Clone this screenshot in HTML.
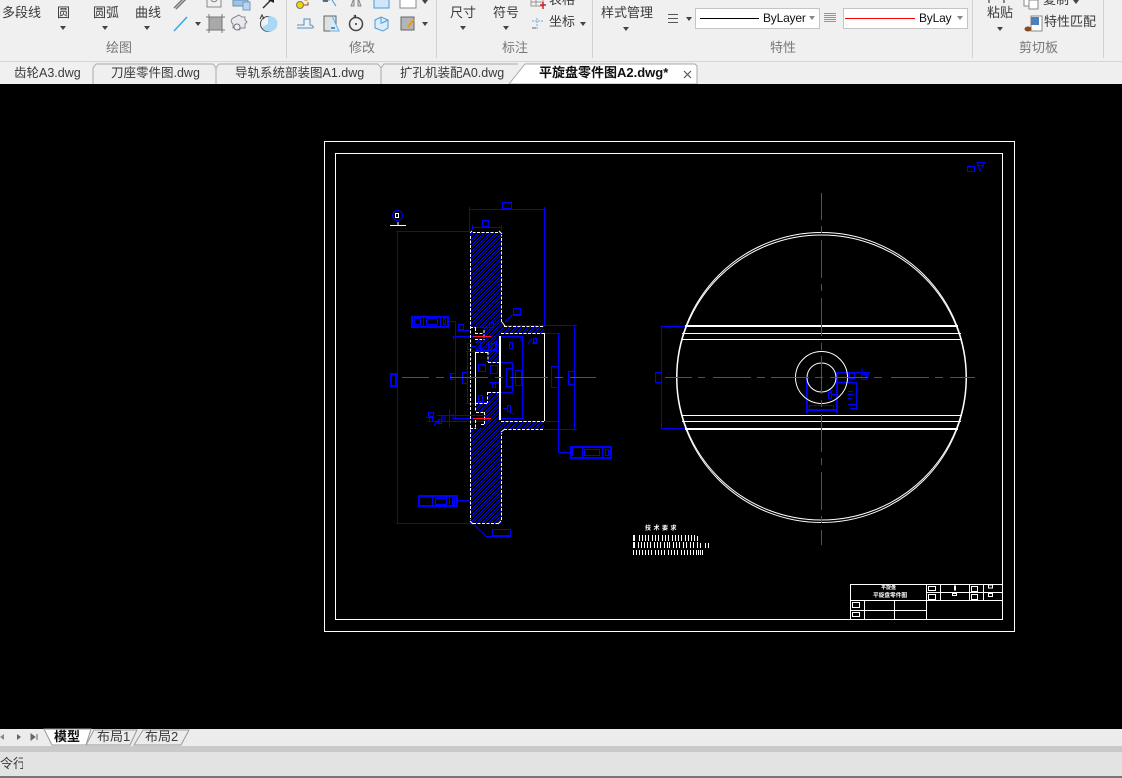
<!DOCTYPE html>
<html lang="zh"><head><meta charset="utf-8"><title>CAD</title>
<style>
html,body{margin:0;padding:0;background:#000}
#p{position:relative;width:1122px;height:778px;overflow:hidden;background:#000;font-family:"Liberation Sans","Noto Sans CJK SC",sans-serif}
.b{position:absolute;left:0}
.t{position:absolute;white-space:nowrap;font-size:13px;line-height:16px;height:16px;color:#3a3a3a}
.g{color:#777}
.a{position:absolute;width:0;height:0;border-left:3px solid transparent;border-right:3px solid transparent;border-top:4px solid #444}
.v{position:absolute;top:0;width:1px;height:58px;background:#d0d0d0}
.c{position:absolute;top:8px;height:19px;width:123px;background:#fff;border:1px solid #c4c4c4}
svg{position:absolute;left:0;top:0}
</style></head><body><div id="p">
<div class="b" style="top:0;width:1122px;height:61px;background:#f0f0f0"></div>
<div class="b" style="top:61px;width:1122px;height:23px;background:#efefef;border-top:1px solid #d6d6d6;box-sizing:border-box"></div>
<div class="b" style="top:729px;width:1122px;height:17px;background:#ececec"></div>
<div class="b" style="top:746px;width:1122px;height:6px;background:#c9c9c9"></div>
<div class="b" style="top:752px;width:1122px;height:24px;background:#e3e3e3"></div>
<div class="b" style="top:776px;width:1122px;height:2px;background:#777"></div>
<div class="v" style="left:286px"></div><div class="v" style="left:436px"></div><div class="v" style="left:592px"></div><div class="v" style="left:972px"></div><div class="v" style="left:1103px"></div>

<span class="t" style="left:2px;top:5px">多段线</span>
<span class="t" style="left:57px;top:5px">圆</span>
<span class="t" style="left:93px;top:5px">圆弧</span>
<span class="t" style="left:135px;top:5px">曲线</span>
<span class="t" style="left:450px;top:5px">尺寸</span>
<span class="t" style="left:493px;top:5px">符号</span>
<span class="t" style="left:549px;top:-8px">表格</span>
<span class="t" style="left:549px;top:14px">坐标</span>
<span class="t" style="left:601px;top:5px">样式管理</span>
<span class="t" style="left:987px;top:5px">粘贴</span>
<span class="t" style="left:1043px;top:-8px">复制</span>
<span class="t" style="left:1044px;top:14px">特性匹配</span>
<span class="t g" style="left:106px;top:40px">绘图</span>
<span class="t g" style="left:349px;top:40px">修改</span>
<span class="t g" style="left:502px;top:40px">标注</span>
<span class="t g" style="left:770px;top:40px">特性</span>
<span class="t g" style="left:1019px;top:40px">剪切板</span>

<i class="a" style="left:60px;top:26px"></i><i class="a" style="left:102px;top:26px"></i><i class="a" style="left:144px;top:26px"></i>
<i class="a" style="left:195px;top:22px"></i><i class="a" style="left:422px;top:22px"></i><i class="a" style="left:422px;top:0"></i>
<i class="a" style="left:460px;top:26px"></i><i class="a" style="left:503px;top:26px"></i><i class="a" style="left:580px;top:22px"></i>
<i class="a" style="left:623px;top:27px"></i><i class="a" style="left:686px;top:17px"></i><i class="a" style="left:997px;top:27px"></i><i class="a" style="left:1073px;top:0"></i>

<div class="c" style="left:695px"></div>
<div class="c" style="left:843px"></div>
<div class="b" style="left:700px;top:18px;width:59px;height:1px;background:#000"></div>
<div class="b" style="left:845px;top:18px;width:70px;height:1px;background:#f00"></div>
<span class="t" style="left:763px;top:10px;font-size:12px;letter-spacing:-.2px;color:#111">ByLayer</span>
<span class="t" style="left:919px;top:10px;font-size:12px;letter-spacing:-.2px;color:#111;width:33px;overflow:hidden">ByLayer</span>
<i class="a" style="left:809px;top:16px;border-top-color:#888"></i><i class="a" style="left:957px;top:16px;border-top-color:#888"></i>

<svg width="1122" height="84" viewBox="0 0 1122 84" fill="none">
<!-- draw icons -->
<path d="M174 8L184 -2M176 9L186 -1" stroke="#777" stroke-width="1.5"/>
<path d="M174 31L187 17" stroke="#35a8e8" stroke-width="1.5"/>
<path d="M207 0V7H221V0M211 0A3.500 3.500 0 0 0 217 0" stroke="#888"/>
<path d="M233 0H248V6H233Z" fill="#9cc3e8" stroke="#6a8fb5"/><path d="M243 2H250V10H243Z" fill="#b8d4ee" stroke="#7b9ab8"/>
<path d="M263 8L271 0" stroke="#333" stroke-width="1.500"/><path d="M268 0H274V3Z" fill="#222"/>
<rect x="209" y="17" width="13" height="13" fill="#a9a9a9" stroke="#666"/><path d="M206 17H225M206 30H225M209 14V33M222 14V33" stroke="#777"/>
<path d="M240 16l3 2h3v3l2 2-2 2v4h-4l-2 2-2-2h-4v-4a3.500 3.500 0 0 1 0-6l2-1z" transform="translate(-1,-1)" stroke="#8a8a8a" fill="#e8e8ee"/><circle cx="237" cy="27" r="3" fill="#f0f0f0" stroke="#777"/>
<circle cx="268" cy="24" r="7.500" stroke="#444"/><path d="M268 24V16.500A7.500 7.500 0 0 1 272 31A7.500 7.500 0 0 1 262 27Z" fill="#a8d8f5"/><path d="M260 19l2-4 2 4" stroke="#333"/>
<!-- modify icons -->
<circle cx="300" cy="5" r="3.500" fill="#f5d400" stroke="#777"/><path d="M304 5H308V2" stroke="#a33"/><circle cx="306" cy="-1" r="2" fill="#d8a000"/>
<path d="M322 0H330M332 0L336 6" stroke="#4a90d0"/><rect x="323" y="-1" width="5" height="3" fill="#666"/>
<path d="M351 6L354 -2V6ZM358 6V-2L361 6Z" stroke="#888" fill="#cfd8e0"/>
<rect x="374" y="-3" width="15" height="11" fill="#cfe6fa" stroke="#4d9ad8"/>
<rect x="400" y="-3" width="16" height="11" fill="#fff" stroke="#888"/>
<path d="M297 28H313M297 25H304V19H310V25C312 25 314 26 313 28" stroke="#4a8fc8"/>
<rect x="324" y="16" width="12" height="15" fill="#e0e0e0" stroke="#666"/><path d="M332 16L339 31H330" fill="#d0ecff" stroke="#68b0e8"/><path d="M331 28H335" stroke="#222"/>
<circle cx="356" cy="24" r="6.500" stroke="#444" stroke-width="1.500"/><circle cx="356" cy="24" r="1" fill="#333"/><path d="M353 16l3-1.500v3z" fill="#333"/>
<path d="M375 20l6-3 7 3v8l-5 3-8-3z M381 17v7 M382 23l6-3" stroke="#4a9ad8" fill="#dcecf8"/>
<rect x="401" y="17" width="13" height="13" fill="#b5b5b5" stroke="#666"/><path d="M408 27L414 19" stroke="#e89a20" stroke-width="2"/>
<!-- other ribbon icons -->
<rect x="531" y="-2" width="12" height="8" stroke="#999"/><path d="M536 -1V6M531 2H543" stroke="#999"/><path d="M540 5H546M543 2V9" stroke="#c22" stroke-width="1.500"/>
<path d="M532 21H543M537 18V30" stroke="#7aaad0" stroke-dasharray="2 1"/><path d="M532 28H536" stroke="#666"/>
<path d="M668 14.500H678M668 18.500H678M668 22.500H678" stroke="#555"/>
<path d="M824 13.500H836M824 15.500H836M824 17.500H836M824 19.500H836M824 21.500H836" stroke="#777" stroke-width=".8"/>
<path d="M989 3V-2H1004V3" stroke="#222"/>
<rect x="1024" y="-3" width="10" height="9" fill="#fff" stroke="#888"/><rect x="1029" y="0" width="9" height="9" fill="#fff" stroke="#888"/>
<rect x="1031" y="16" width="11" height="15" fill="#fff" stroke="#888"/><rect x="1031" y="17" width="8" height="8" fill="#4f7fb8"/><ellipse cx="1028" cy="29" rx="3.500" ry="2.500" fill="#8a4a20"/>
<!-- file tabs -->
<path d="M0 84V64H90L93 68V84" fill="#f0f0f0"/>
<path d="M93 68L96 64H213L216 68V84M93 68V84M216 68L219 64H378L381 68V84M381 68L384 64H518" stroke="#aaa"/>
<path d="M509 84L525 64H695L697 66V84Z" fill="#fff" stroke="#aaa"/>
<path d="M684 71L691 78M691 71L684 78" stroke="#555" stroke-width="1.200"/>
</svg>
<span class="t" style="left:14px;top:65px;font-size:12.500px">齿轮A3.dwg</span>
<span class="t" style="left:111px;top:65px;font-size:12.500px">刀座零件图.dwg</span>
<span class="t" style="left:235px;top:65px;font-size:12.500px">导轨系统部装图A1.dwg</span>
<span class="t" style="left:400px;top:65px;font-size:12.500px">扩孔机装配A0.dwg</span>
<span class="t" style="left:539px;top:65px;font-size:13px;font-weight:bold;color:#111">平旋盘零件图A2.dwg*</span>

<svg width="1122" height="778" viewBox="0 0 1122 778" fill="none" shape-rendering="crispEdges">
<defs>
<pattern id="h" width="3" height="3" patternUnits="userSpaceOnUse"><rect x="0" y="2" width="1" height="1" fill="#0000ff"/><rect x="1" y="1" width="1" height="1" fill="#0000ff"/><rect x="2" y="0" width="1" height="1" fill="#0000ff"/></pattern>
</defs>
<!-- frames -->
<rect x="324.500" y="141.500" width="690" height="490" stroke="#fff"/>
<rect x="335.500" y="153.500" width="667" height="466" stroke="#fff"/>
<!-- hatch -->
<path d="M470 232H501V322L505 326H544V333H500V362H488V352H476V339H484V327H470Z" fill="url(#h)"/>
<path d="M470 523H501V432L505 429H544V421H500V392H488V403H476V412H484V428H470Z" fill="url(#h)"/>
<!-- blue dims left -->
<g stroke="#0000ff">
<path d="M469.500 207V232M544.500 207V325M469 209.500H545"/>
<rect x="502.500" y="202.500" width="9" height="6"/>
<path d="M472 227.500H501M472.500 225V230M501.500 225V231"/>
<rect x="482.500" y="220.500" width="6" height="6"/>
<path d="M396 231.500H470M397.500 232V523M396 523.500H472"/>
<rect x="390.500" y="373.500" width="6" height="13"/><rect x="391.500" y="374.500" width="4" height="11"/>
<circle cx="397.500" cy="215.500" r="5" shape-rendering="auto"/>
<!-- left top callout -->
<rect x="411.500" y="316.500" width="37" height="11"/><rect x="412.500" y="317.500" width="35" height="9"/>
<path d="M423.500 317V327M440.500 317V327"/>
<rect x="414.500" y="318.500" width="6" height="6"/><rect x="426.500" y="318.500" width="11" height="6"/><rect x="443.500" y="318.500" width="2" height="6"/>
<path d="M449 321.500H455.500V418M453 336.500H491M453 418.500H490M453.500 336V340M453 414V419"/>
<path d="M457 330.500H470"/>
<rect x="458.500" y="324.500" width="5" height="5"/>
<path d="M466 351.500H488M466 403.500H488M467.500 352V403"/>
<path d="M475 327.500H495"/>
<rect x="489.500" y="322.500" width="4" height="5"/>
<!-- right side -->
<path d="M501 325.500H577M544 429.500H577M574.500 325V429"/>
<rect x="568.500" y="371.500" width="6" height="13"/>
<path d="M501 333.500H560M558.500 334V452M558 452.500H570M501 421.500H560"/>
<rect x="570.500" y="446.500" width="41" height="12"/><rect x="571.500" y="447.500" width="39" height="10"/>
<path d="M582.500 447V458M602.500 447V458"/>
<rect x="584.500" y="449.500" width="15" height="6"/><rect x="605.500" y="449.500" width="3" height="6"/>
<path d="M572.500 448V456"/>
<!-- lower left callout -->
<rect x="418.500" y="495.500" width="39" height="11"/><rect x="419.500" y="496.500" width="37" height="9"/>
<path d="M432.500 496V506M449.500 496V506"/>
<rect x="435.500" y="498.500" width="11" height="6"/><rect x="452.500" y="498.500" width="2" height="6"/>
<path d="M458 500.500H469"/>
<rect x="492.500" y="529.500" width="18" height="6"/>
<path d="M485 536.500H511"/><path d="M472 523L486 536" shape-rendering="auto"/>
<!-- inner dims -->
<path d="M501 336.500H523M522.500 337V417M501 418.500H524M521 336V341"/>
<path d="M488 362.500H513M512.500 363V392M488 392.500H513"/>
<rect x="506.500" y="368.500" width="6" height="18"/><rect x="515.500" y="370.500" width="6" height="15"/>
<rect x="551.500" y="366.500" width="7" height="21"/>
<rect x="513.500" y="308.500" width="7" height="6"/>
<path d="M511 315.500H522"/>
<path d="M505 322L512 315" shape-rendering="auto"/>
<rect x="509.500" y="342.500" width="3" height="6"/>
<rect x="533.500" y="338.500" width="3" height="4"/><path d="M532 343.500H538"/>
<path d="M528 344L532 338" shape-rendering="auto"/>
<rect x="507.500" y="405.500" width="3" height="6"/><path d="M503 408.500H507"/>
<path d="M509 412L513 414" shape-rendering="auto"/>
<path d="M437 415.500H487M427 421.500H490"/>
<path d="M449.500 409V427"/>
<rect x="428.500" y="412.500" width="5" height="4"/><path d="M426 417.500H435M429.500 418V421M432.500 418V421"/>
<rect x="438.500" y="419.500" width="3" height="4"/><path d="M442 416V421M445 416V421"/>
<path d="M434 425L440 419" shape-rendering="auto"/>
<rect x="467.500" y="343.500" width="4" height="6"/><path d="M472 346.500H476"/>
<rect x="491.500" y="343.500" width="4" height="6"/>
<path d="M480.500 341V352M488.500 341V352M496.500 340V352M476 350.500H496"/>
<rect x="478.500" y="364.500" width="7" height="7"/><rect x="490.500" y="365.500" width="7" height="8"/>
<rect x="492.500" y="383.500" width="3" height="4"/>
<path d="M489 382.500H499"/>
<rect x="478.500" y="395.500" width="4" height="6"/>
<path d="M476 402.500H490"/>
<rect x="462.500" y="372.500" width="5" height="11"/>
<rect x="450.500" y="373.500" width="5" height="6"/>
<!-- right-view dims -->
<path d="M661 326.500H686M661 428.500H686M661.500 326V429"/>
<rect x="655.500" y="372.500" width="6" height="10"/>
<path d="M806.500 378V413M807.500 378V413M836.500 372V413M837.500 372V413M806 410.500H838M806 409.500H838"/>
<rect x="809.500" y="405.500" width="24" height="5"/>
<path d="M836 372.500H870M836 382.500H856M856.500 382V410"/>
<rect x="849.500" y="373.500" width="5" height="5"/><rect x="861.500" y="374.500" width="5" height="5"/>
<path d="M849 373V378M868 378V373M848 382V373M862 372V368"/>
<rect x="828.500" y="392.500" width="3" height="6"/><path d="M832 394.500H836M829 389L832 392"/>
<path d="M848 391.500H853M848 394.500H853M848 398.500H852M848 404.500H856M850 408.500H856"/>
<!-- top-right symbol -->
<rect x="967.500" y="166.500" width="7" height="5"/>
<path d="M976.500 162.500H985M977 165.500H984M977 163L980 171L984 163"/>
</g>
<!-- white dashed section outline -->
<g stroke="#fff" stroke-dasharray="3 1.500">
<path d="M470.500 236V520M473 523.500H498M501.500 520V433M504 429.500H544M501 421.500H544M504 326.500H544M501 333.500H544M501.500 322V235M498 232.500H473"/>
<path d="M470 327.500H476M475.500 328V334M475 333.500H484M484 330V340M475 339.500H482M475.500 403V412M475 403.500H488M488 352V362M487.500 392V403M476 352.500H488M488 362.500H500M488 392.500H500M470 428.500H476M475.500 420V428M476 412.500H484M484.500 412V424M481 424.500H485"/>
</g>
<g stroke="#fff">
<path d="M475.500 352V403M499.500 336V420M500.500 336V420M544.500 333V421"/>
<path d="M470 233L472 231M499 231L502 234M470 521L473 524M498 524L501 521M502 322L505 326M501 432L505 429" shape-rendering="auto"/>
<path d="M390 225.500H406M398 222V225"/>
<rect x="395.500" y="213.500" width="3" height="4"/>
<!-- right view lines -->
<path d="M685 325.500H958M685 326.500H958M682 333.500H961M681 339.500H962M681 415.500H962M682 421.500H961M685 428.500H958M685 429.500H958"/>
</g>
<g stroke="#fff" shape-rendering="auto">
<circle cx="821.500" cy="377.500" r="145"/><ellipse cx="821.500" cy="377.500" rx="144.500" ry="142.500"/>
<circle cx="821.500" cy="377.500" r="26"/><circle cx="821.500" cy="377.500" r="14.500"/>
</g>
<!-- red centre lines -->
<g stroke="#e01038">
<path d="M402 377.500H429M436 377.500H444M450 377.500H488M495 377.500H503M510 377.500H548M555 377.500H563M570 377.500H596"/>
<path d="M473 336.500H491M473 418.500H491" stroke="#ff1030"/>
<path d="M665 377.500H692M698 377.500H705M713 377.500H751M757 377.500H765M771 377.500H809M815 377.500H823M830 377.500H868M874 377.500H882M891 377.500H929M935 377.500H943M950 377.500H975"/>
<path d="M821.500 193V220M821.500 226V233M821.500 240V278M821.500 284V291M821.500 298V336M821.500 343V350M821.500 356V394M821.500 400V407M821.500 414V452M821.500 458V465M821.500 472V510M821.500 516V523M821.500 530V545"/>
</g>
<!-- tech notes -->
<g stroke="#fff">
<path d="M633.500 535V541M634.500 535V541M639.500 535V541M642.500 535V541M645.500 535V541M648.500 535V541M652.500 535V541M655.500 535V541M658.500 535V541M662.500 535V541M665.500 535V541M668.500 535V541M672.500 535V541M675.500 535V541M678.500 535V541M681.500 535V541M685.500 535V541M688.500 535V541M691.500 535V541M694.500 535V541M697.500 536V541"/>
<path d="M633.500 542V548M634.500 542V548M638.500 542V548M641.500 542V548M644.500 542V548M647.500 542V548M650.500 542V548M654.500 542V548M657.500 542V548M660.500 542V548M664.500 542V548M667.500 542V548M669.500 542V548M673.500 542V548M676.500 542V548M679.500 542V548M683.500 542V548M686.500 542V548M690.500 542V548M693.500 542V548M697.500 542V548M700.500 543V548M705.500 543V548M708.500 543V548"/>
<path d="M633.500 550V555M636.500 550V555M639.500 550V555M642.500 550V555M645.500 550V555M648.500 550V555M651.500 550V555M655.500 550V555M658.500 550V555M661.500 550V555M664.500 550V555M668.500 550V555M671.500 550V555M674.500 550V555M677.500 550V555M681.500 550V555M684.500 550V555M687.500 550V555M690.500 550V555M693.500 550V555M696.500 550V555M698.500 550V555M700.500 550V555M702.500 550V555"/>
</g>
<!-- title block -->
<g stroke="#fff">
<rect x="850.500" y="584.500" width="152" height="35"/>
<path d="M851 600.500H1002M926.500 585V619M864.500 601V619M894.500 601V619M851 610.500H926M927 592.500H1002M940.500 585V600M969.500 585V600M983.500 585V600"/>
<rect x="928.500" y="586.500" width="7" height="4"/><rect x="928.500" y="594.500" width="7" height="5"/>
<rect x="971.500" y="586.500" width="6" height="5"/><rect x="971.500" y="594.500" width="6" height="5"/>
<rect x="954.500" y="586" width="1" height="4"/><rect x="952.500" y="593.500" width="4" height="2"/>
<rect x="988.500" y="585" width="4" height="3"/><rect x="988.500" y="593.500" width="4" height="3"/>
<rect x="852.500" y="602.500" width="7" height="5"/><rect x="852.500" y="612.500" width="7" height="4"/>
</g>
</svg>
<span style="position:absolute;left:645px;top:526px;font-size:6px;line-height:7px;color:#fff;letter-spacing:2.500px;font-weight:bold">技术要求</span>
<span style="position:absolute;left:881px;top:585px;font-size:5px;line-height:7px;color:#fff;font-weight:bold">平旋盘</span>
<span style="position:absolute;left:873px;top:593px;font-size:5.700px;line-height:7px;color:#fff;font-weight:bold">平旋盘零件图</span>

<!-- layout tabs -->
<svg width="1122" height="778" viewBox="0 0 1122 778" fill="none">
<path d="M0 737L4 734V740Z" fill="#888"/><path d="M17 734L21 737L17 740Z" fill="#666"/><path d="M31 734L35 737L31 740ZM37 734V740" fill="#666" stroke="#666"/>
<path d="M44 729L52 745H86L91 729Z" fill="#fff" stroke="#999"/>
<path d="M86 745L94 730H137L130 745Z" fill="#ececec" stroke="#999"/>
<path d="M134 745L143 730H189L181 745Z" fill="#ececec" stroke="#999"/>
</svg>
<span class="t" style="left:54px;top:729px;font-weight:bold;color:#111">模型</span>
<span class="t" style="left:97px;top:729px">布局1</span>
<span class="t" style="left:145px;top:729px">布局2</span>
<span class="t" style="left:0;top:756px;width:23px;overflow:hidden">令行</span>
</div></body></html>
